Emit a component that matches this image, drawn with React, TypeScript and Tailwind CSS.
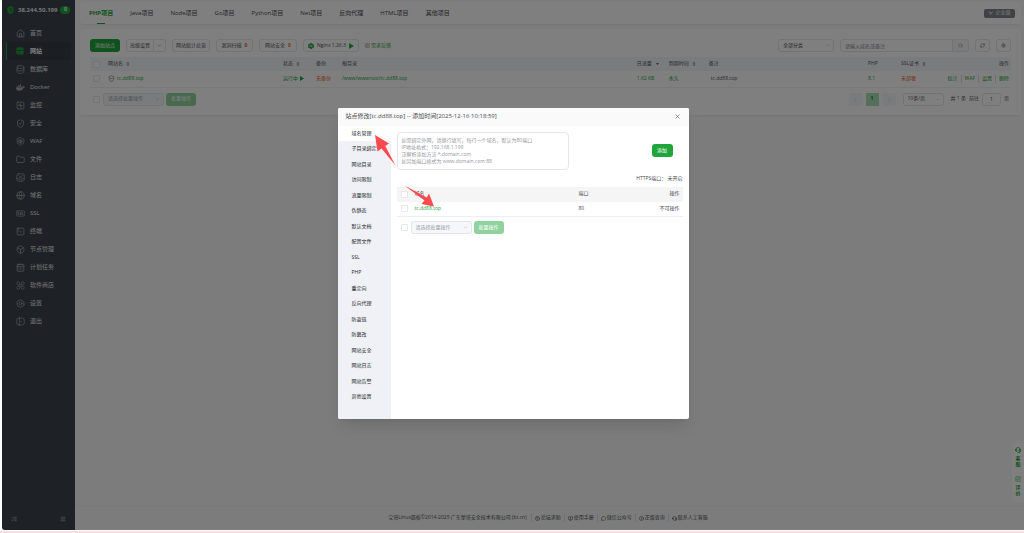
import type { ComponentType, ReactNode } from "react";
import {
  BookOpen,
  Bolt,
  Box,
  CalendarDays,
  ChevronDown,
  ChevronLeft,
  ChevronRight,
  CircleHelp,
  Folder,
  Globe,
  Headset,
  House,
  Info,
  ListChecks,
  Menu,
  MessageCircle,
  RefreshCw,
  Search,
  Settings,
  ShieldCheck,
  ShieldMinus,
  SquareActivity,
  SquarePen,
  SquareTerminal,
  X,
} from "lucide-react";
import { FaDocker } from "react-icons/fa6";
import { clsx } from "clsx";

function Glyph({ className, children }: { className?: string; children: ReactNode }) {
  return (
    <svg
      viewBox="0 0 24 24"
      className={className}
      fill="none"
      stroke="currentColor"
      strokeWidth={1.75}
      strokeLinecap="round"
      strokeLinejoin="round"
      aria-hidden
    >
      {children}
    </svg>
  );
}

function SiteIcon({ className }: { className?: string }) {
  return (
    <Glyph className={className}>
      <path d="M2 8V6a4 4 0 0 1 4-4h12a4 4 0 0 1 4 4v2Z" fill="currentColor" />
      <path d="M2 12h6v10H6a4 4 0 0 1-4-4Z" fill="currentColor" />
      <path d="M12 12h10v6a4 4 0 0 1-4 4h-6Z" fill="currentColor" />
    </Glyph>
  );
}

function DatabaseIcon({ className }: { className?: string }) {
  return (
    <Glyph className={className}>
      <rect x="3" y="2" width="18" height="7" rx="3.5" />
      <path d="M3 6v6c0 2 2 3.500 4 3.500h10c2 0 4-1.500 4-3.500V6M3 12v6c0 2 2 4 4 4h10c2 0 4-2 4-4v-6" />
    </Glyph>
  );
}

function WafIcon({ className }: { className?: string }) {
  return (
    <Glyph className={className}>
      <path d="M12 1.500 21 6v7c0 4.500-4 7.500-9 9.500-5-2-9-5-9-9.500V6Z" />
      <path d="M8 8h8v7l-4 2-4-2Z M8 11.500h8 M12 8v8" />
    </Glyph>
  );
}

function LogIcon({ className }: { className?: string }) {
  return (
    <Glyph className={className}>
      <rect x="2" y="2" width="20" height="20" rx="5" />
      <path d="M7 7l5 4 5-4M2 15h4l6-4 6 4h4M8 18h8" />
    </Glyph>
  );
}

function SslIcon({ className }: { className?: string }) {
  return (
    <Glyph className={className}>
      <rect x="1" y="5" width="22" height="14" rx="3" />
      <path d="M8 9H5v3h3v3H5M14 9h-3v3h3v3h-3M17 9v6h3" />
    </Glyph>
  );
}

function StoreIcon({ className }: { className?: string }) {
  return (
    <Glyph className={className}>
      <path d="M10 10H6a4 4 0 1 1 4-4ZM14 10V6a4 4 0 1 1 4 4ZM10 14v4a4 4 0 1 1-4-4ZM14 14h4a4 4 0 1 1-4 4Z" />
    </Glyph>
  );
}

function ExitIcon({ className }: { className?: string }) {
  return (
    <Glyph className={className}>
      <path d="M9 3H6a4 4 0 0 0-4 4v10a4 4 0 0 0 4 4h3M9 1.500v21M9 3h8a5 5 0 0 1 5 5v8a5 5 0 0 1-5 5H9M14 11v2" />
    </Glyph>
  );
}

const menuItems: { label: string; icon: ComponentType<{ className?: string }> }[] = [
  { label: "首页", icon: House },
  { label: "网站", icon: SiteIcon },
  { label: "数据库", icon: DatabaseIcon },
  { label: "Docker", icon: FaDocker },
  { label: "监控", icon: SquareActivity },
  { label: "安全", icon: ShieldCheck },
  { label: "WAF", icon: WafIcon },
  { label: "文件", icon: Folder },
  { label: "日志", icon: LogIcon },
  { label: "域名", icon: Globe },
  { label: "SSL", icon: SslIcon },
  { label: "终端", icon: SquareTerminal },
  { label: "节点管理", icon: Box },
  { label: "计划任务", icon: CalendarDays },
  { label: "软件商店", icon: StoreIcon },
  { label: "设置", icon: Bolt },
  { label: "退出", icon: ExitIcon },
];

const tabs = [
  "PHP项目",
  "Java项目",
  "Node项目",
  "Go项目",
  "Python项目",
  "Net项目",
  "反向代理",
  "HTML项目",
  "其他项目",
];

const siteMenu = [
  "域名管理",
  "子目录绑定",
  "网站目录",
  "访问限制",
  "流量限制",
  "伪静态",
  "默认文档",
  "配置文件",
  "SSL",
  "PHP",
  "重定向",
  "反向代理",
  "防盗链",
  "防篡改",
  "网站安全",
  "网站日志",
  "网站告警",
  "其他设置",
];

const footerLinks = [
  { label: "论坛求助", icon: CircleHelp },
  { label: "使用手册", icon: BookOpen },
  { label: "微信公众号", icon: MessageCircle },
  { label: "正版查询", icon: Info },
  { label: "联系人工客服", icon: Headset },
];

const domainHint = [
  "如需绑定外网，请换行填写，每行一个域名，默认为80端口",
  "IP地址格式：192.168.1.199",
  "泛解析添加方法 *.domain.com",
  "如另加端口格式为 www.domain.com:88",
].join("\n");

function Tick({ label }: { label: string }) {
  return (
    <input
      type="checkbox"
      aria-label={label}
      className="block size-[7px] shrink-0 appearance-none rounded-[1px] border border-[#e6e8ec] bg-white"
    />
  );
}

function Sort() {
  return (
    <svg viewBox="0 0 6 8" className="ml-[3px] inline-block h-[6px] w-[4px] align-middle" aria-hidden>
      <path d="M3 0.5 5.5 3.3H0.5Z M3 7.5 5.5 4.7H0.5Z" fill="#8a8f98" />
    </svg>
  );
}

function ToolButton({ children, className }: { children: ReactNode; className?: string }) {
  return (
    <button
      type="button"
      className={clsx(
        "flex h-[13px] items-center justify-center gap-[3px] rounded-[3px] border border-[#e4e6ea] bg-white whitespace-nowrap",
        className,
      )}
    >
      {children}
    </button>
  );
}

function Select({ label, value, className }: { label: string; value: string; className?: string }) {
  return (
    <div className={clsx("relative", className)}>
      <select
        aria-label={label}
        className="block h-[13px] w-full appearance-none rounded-[3px] border border-[#e4e6ea] bg-inherit pl-[4px]"
      >
        <option>{value}</option>
      </select>
      <ChevronDown className="pointer-events-none absolute top-[4px] right-[4px] size-[5px] text-[#a8abb2]" />
    </div>
  );
}

function BatchBar() {
  return (
    <div className="flex items-center">
      <Tick label="全选" />
      <Select
        label="批量操作"
        value="请选择批量操作"
        className="ml-[3px] w-[61px] rounded-[3px] bg-[#f5f7fa] text-[#9a9da4]"
      />
      <button type="button" className="ml-[2px] h-[13px] w-[30px] rounded-[3px] bg-[#90d29d] text-white">
        批量操作
      </button>
    </div>
  );
}

function Sidebar() {
  return (
    <aside className="flex w-[73px] shrink-0 flex-col rounded-bl-[3px] bg-[#3c444d] px-[4px] text-[6px] text-[#e6e8ea]">
      <div className="flex h-[20px] items-center pl-[1px] font-bold">
        <svg viewBox="0 0 16 18" className="mr-[4px] h-[8px] w-[7px] shrink-0" aria-hidden>
          <path d="M8 0 15 3v8c0 3-3 5.500-7 7-4-1.500-7-4-7-7V3Z" fill="#20a53a" />
          <path d="M5 5h6v3H8v2h3v3H5" fill="none" stroke="#25633a" strokeWidth="1.500" />
        </svg>
        38.244.50.199
        <span className="ml-[3px] flex h-[8px] w-[10px] items-center justify-center rounded-full bg-[#20a53a] text-[5px] text-white">
          0
        </span>
      </div>
      <nav className="mt-[4px] flex flex-col">
        {menuItems.map(({ label, icon: Icon }) => {
          const active = label === "网站";
          return (
            <a
              key={label}
              href="#"
              className={clsx(
                "flex h-[18px] items-center gap-[5px] border-l pl-[9px]",
                active ? "border-[#20a53a] bg-[#363d45] font-bold text-white" : "border-transparent",
              )}
            >
              <Icon
                className={clsx("shrink-0", active ? "size-[8px] mr-px text-[#20a53a]" : "size-[9px] text-[#a4a8ad]")}
              />
              {label}
            </a>
          );
        })}
      </nav>
      <div className="mt-auto flex items-center justify-between px-[5px] pb-[8px] text-[#a4a8ad]">
        <button type="button" aria-label="面板设置">
          <ListChecks className="size-[6px]" strokeWidth={3} />
        </button>
        <button type="button" aria-label="收起菜单">
          <Menu className="size-[6px]" strokeWidth={3} />
        </button>
      </div>
    </aside>
  );
}

function TabBar() {
  return (
    <header className="flex h-[22px] items-center rounded-[3px] bg-white pr-[6px] text-[6px] text-[#484b50] shadow-xs">
      <nav className="flex h-full gap-[17px] px-[9px]">
        {tabs.map((tab, i) => (
          <a
            key={tab}
            href="#"
            className={clsx(
              "flex h-full flex-col items-center pt-[7px] whitespace-nowrap",
              i === 0 && "font-bold text-[#20a53a]",
            )}
          >
            <span className="leading-[8px]">{tab}</span>
            {i === 0 && <span className="mt-auto h-px w-[8px] bg-[#20a53a]" />}
          </a>
        ))}
      </nav>
      <button
        type="button"
        className="ml-auto flex h-[9px] w-[31px] items-center justify-center gap-[2px] rounded-[2px] bg-[#80848a] text-[5px] text-[#f2f2f2]"
      >
        <svg viewBox="0 0 10 10" className="size-[5px]" aria-hidden>
          <path d="M1 2h3l1 5 4-6" fill="none" stroke="currentColor" strokeWidth="1.500" />
        </svg>
        企业版
      </button>
    </header>
  );
}

function Toolbar() {
  return (
    <div className="flex items-center gap-[6px]">
      <button type="button" className="h-[13px] w-[30px] rounded-[3px] bg-[#20a53a] text-white">
        添加站点
      </button>
      <div className="flex">
        <ToolButton className="w-[28px] rounded-r-none">高级设置</ToolButton>
        <ToolButton className="w-[12px] rounded-l-none border-l-0">
          <ChevronDown className="size-[5px]" aria-label="更多" />
        </ToolButton>
      </div>
      <ToolButton className="w-[38px]">网站统计总览</ToolButton>
      <ToolButton className="w-[37px]">
        漏洞扫描 <b className="text-[#f0642d]">0</b>
      </ToolButton>
      <ToolButton className="w-[38px]">
        网站安全 <b className="text-[#f0642d]">0</b>
      </ToolButton>
      <ToolButton className="w-[56px] gap-[2px]">
        <svg viewBox="0 0 12 12" className="size-[6px]" aria-hidden>
          <path d="M6 0 11.500 3v6L6 12 .5 9V3Z" fill="#109639" />
          <path d="M4 9V3.500L8 8.500V3" fill="none" stroke="#fff" strokeWidth="1.300" />
        </svg>
        Nginx 1.26.3
        <svg viewBox="0 0 8 10" className="h-[6px] w-[5px]" aria-hidden>
          <path d="M0 0 8 5 0 10Z" fill="#20a53a" />
        </svg>
      </ToolButton>
      <a href="#" className="flex items-center gap-px whitespace-nowrap text-[#20a53a]">
        <SquarePen className="size-[5px] text-[#606266]" />
        需求反馈
      </a>
      <div className="ml-auto flex items-center gap-[6px]">
        <Select label="分类" value="全部分类" className="w-[56px]" />
        <div className="flex">
          <input
            aria-label="搜索网站"
            placeholder="请输入域名或备注"
            className="h-[13px] w-[113px] rounded-l-[3px] border border-[#e4e6ea] px-[4px] placeholder:text-[#85898f]"
          />
          <button
            type="button"
            aria-label="搜索"
            className="flex h-[13px] w-[16px] items-center justify-center rounded-r-[3px] border border-l-0 border-[#e4e6ea] bg-[#f5f7fa]"
          >
            <Search className="size-[5px] text-[#80848a]" />
          </button>
        </div>
        <ToolButton className="w-[15px]">
          <RefreshCw className="size-[5px]" aria-label="刷新" />
        </ToolButton>
        <ToolButton className="w-[15px]">
          <Settings className="size-[5px]" aria-label="设置" />
        </ToolButton>
      </div>
    </div>
  );
}

function SiteTable() {
  return (
    <table className="mt-[5px] w-full table-fixed text-left whitespace-nowrap">
      <colgroup>
        <col className="w-[18px]" />
        <col className="w-[19%]" />
        <col className="w-[33px]" />
        <col className="w-[26px]" />
        <col className="w-[32%]" />
        <col className="w-[32px]" />
        <col className="w-[40px]" />
        <col />
        <col className="w-[33px]" />
        <col className="w-[40px]" />
        <col className="w-[70px]" />
      </colgroup>
      <thead>
        <tr className="h-[14px] bg-[#f5f7f8] text-[#50545a] *:font-normal">
          <th className="pl-[3px]">
            <Tick label="全选网站" />
          </th>
          <th>
            网站名
            <Sort />
          </th>
          <th>
            状态
            <Sort />
          </th>
          <th>备份</th>
          <th>根目录</th>
          <th>
            日流量
            <svg viewBox="0 0 6 4" className="ml-[4px] inline-block h-[2px] w-[3px] align-middle" aria-hidden>
              <path d="M0 0h6L3 4Z" fill="#606266" />
            </svg>
          </th>
          <th>
            到期时间
            <Sort />
          </th>
          <th>备注</th>
          <th>PHP</th>
          <th>
            SSL证书
            <Sort />
          </th>
          <th className="pr-[2px] text-right">操作</th>
        </tr>
      </thead>
      <tbody>
        <tr className="h-[16px] border-b border-[#f0f1f3] text-[#20a53a]">
          <td className="pl-[3px]">
            <Tick label="选择 tc.dd88.top" />
          </td>
          <td>
            <a href="#" className="flex items-center gap-[2px]">
              <ShieldMinus className="size-[7px] text-[#606266]" />
              tc.dd88.top
            </a>
          </td>
          <td>
            <a href="#" className="flex items-center gap-[2px]">
              运行中
              <svg viewBox="0 0 8 10" className="h-[5px] w-[4px]" aria-hidden>
                <path d="M0 0 8 5 0 10Z" fill="#20a53a" />
              </svg>
            </a>
          </td>
          <td className="text-[#f0642d]">无备份</td>
          <td>
            <a href="#">/www/wwwroot/tc.dd88.top</a>
          </td>
          <td>1.62 KB</td>
          <td>永久</td>
          <td className="pl-[2px] text-[#50545a]">tc.dd88.top</td>
          <td>8.1</td>
          <td className="text-[#f0642d]">未部署</td>
          <td className="pr-[2px]">
            <div className="flex justify-end divide-x divide-[#dcdfe6] *:px-[3px]">
              <a href="#">统计</a>
              <a href="#">WAF</a>
              <a href="#">设置</a>
              <a href="#" className="pr-0!">
                删除
              </a>
            </div>
          </td>
        </tr>
      </tbody>
    </table>
  );
}

function Pagination() {
  return (
    <div className="flex items-center pr-[2px]">
      <button type="button" aria-label="上一页" className="flex size-[13px] items-center justify-center bg-[#f5f7f8]">
        <ChevronLeft className="size-[5px] text-[#a8abb2]" />
      </button>
      <button type="button" className="mx-[4px] size-[13px] bg-[#a9dfb4] font-bold text-[#147c2a]">
        1
      </button>
      <button type="button" aria-label="下一页" className="flex size-[13px] items-center justify-center bg-[#f5f7f8]">
        <ChevronRight className="size-[5px] text-[#a8abb2]" />
      </button>
      <Select label="每页条数" value="10条/页" className="ml-[7px] w-[41px]" />
      <span className="ml-[7px]">共 1 条</span>
      <label className="ml-[3px] flex items-center gap-[3px]">
        前往
        <input defaultValue="1" className="h-[13px] w-[19px] rounded-[3px] border border-[#e4e6ea] text-center" />
        页
      </label>
    </div>
  );
}

function SideWidget() {
  return (
    <div className="absolute top-[441px] right-0 flex w-[12px] flex-col items-center gap-[9px] rounded-l-[3px] bg-white py-[6px] text-[5px] leading-[6px] font-bold text-[#20a53a]">
      <a href="#" className="flex w-[5px] flex-col items-center gap-[2px] break-all">
        <Headset className="size-[6px]" strokeWidth={3} />
        客服
      </a>
      <a href="#" className="flex w-[5px] flex-col items-center gap-[2px] break-all">
        <SquarePen className="size-[6px]" />
        评价
      </a>
    </div>
  );
}

function Footer() {
  return (
    <footer className="mt-auto flex h-[25px] items-center justify-center border-t border-[#f0f3f1] text-[5px] text-[#50545a]">
      <span className="mr-[4px]">宝塔Linux面板©2014-2025 广东堡塔安全技术有限公司 (bt.cn)</span>
      {footerLinks.map(({ label, icon: Icon }) => (
        <a key={label} href="#" className="flex items-center border-l border-[#dfe2e1] px-[3px]">
          <Icon className="mr-px size-[5px]" strokeWidth={2.5} />
          {label}
        </a>
      ))}
    </footer>
  );
}

function Arrows() {
  return (
    <svg viewBox="0 0 110 110" className="pointer-events-none absolute top-0 left-0 size-[110px]" aria-hidden>
      <g fill="#fb4b4e">
        <path d="M37 27 51 35.500 47.300 38 57.500 57.500 43.500 40.500 39.500 43.500Z" />
        <path d="M96 98.500 83.500 96 86.500 92.500 66.500 77.500 88.800 89.500 91 85.500Z" />
      </g>
    </svg>
  );
}

function SiteDialog() {
  return (
    <div
      role="dialog"
      aria-labelledby="site-dialog-title"
      className="relative w-[351px] overflow-hidden rounded-[2px] bg-white text-[5px] text-[#484b50] shadow-lg"
    >
      <div className="flex h-[18px] items-center justify-between bg-[#fafafa] px-[8px]">
        <h2 id="site-dialog-title" className="text-[6px]">
          站点修改[tc.dd88.top] -- 添加时间[2025-12-16 10:18:59]
        </h2>
        <button type="button" aria-label="关闭">
          <X className="size-[7px]" />
        </button>
      </div>
      <div className="flex">
        <nav className="w-[53px] shrink-0 bg-[#f0f1f6] pb-[14px] text-[#222428]">
          <div className="grid h-[279px] auto-rows-fr">
            {siteMenu.map((item, i) => (
              <a key={item} href="#" className={clsx("flex items-center pl-[14px]", i === 0 && "bg-white")}>
                {item}
              </a>
            ))}
          </div>
        </nav>
        <div className="min-w-0 grow px-[6px] pt-[6px]">
          <div className="flex items-center justify-between pr-[10px]">
            <textarea
              aria-label="域名"
              placeholder={domainHint}
              className="block h-[38px] w-[172px] resize-none overflow-hidden rounded-[4px] border border-[#e4e6ea] px-[4px] py-[4px] leading-[7px] placeholder:text-[#94979e]"
            />
            <button type="button" className="h-[13px] w-[21px] rounded-[3px] bg-[#20a53a] text-white">
              添加
            </button>
          </div>
          <p className="mt-[4px] text-right leading-[8px]">HTTPS端口： 未开启</p>
          <table className="mt-[5px] w-full table-fixed text-left">
            <colgroup>
              <col className="w-[18px]" />
              <col />
              <col className="w-[54px]" />
              <col className="w-[50px]" />
            </colgroup>
            <thead>
              <tr className="h-[15px] bg-[#f5f5f6] *:font-normal">
                <th className="pl-[4px]">
                  <Tick label="全选域名" />
                </th>
                <th>域名</th>
                <th>端口</th>
                <th className="pr-[3px] text-right">操作</th>
              </tr>
            </thead>
            <tbody>
              <tr className="h-[15px] border-b border-[#ebeef5]">
                <td className="pl-[4px]">
                  <Tick label="选择域名 tc.dd88.top" />
                </td>
                <td>
                  <a href="#" className="text-[#20a53a]">
                    tc.dd88.top
                  </a>
                </td>
                <td>80</td>
                <td className="pr-[3px] text-right">不可操作</td>
              </tr>
            </tbody>
          </table>
          <div className="mt-[4px] pl-[4px]">
            <BatchBar />
          </div>
        </div>
      </div>
      <Arrows />
    </div>
  );
}

export default function App() {
  return (
    <div className="flex min-h-screen flex-col bg-[#fbe0df] font-['Open_Sans','Noto_Sans_CJK_SC',sans-serif]">
      <div className="relative mb-[2px] flex grow border-b border-l-2 border-white bg-white">
        <Sidebar />
        <div className="relative flex min-w-0 grow flex-col bg-[#f6f9f7]">
          <main className="flex flex-col gap-[5px] pt-[2px] pr-[3px] pl-[5px]">
            <TabBar />
            <section className="rounded-[3px] bg-white px-[10px] pt-[10px] pb-[9px] text-[5px] text-[#50545a] shadow-xs">
              <Toolbar />
              <SiteTable />
              <div className="mt-[5px] flex items-center justify-between pl-[3px]">
                <BatchBar />
                <Pagination />
              </div>
            </section>
          </main>
          <SideWidget />
          <Footer />
        </div>
        <div className="absolute inset-0 flex items-center justify-center rounded-bl-[3px] bg-black/50 pb-[4px]">
          <SiteDialog />
        </div>
      </div>
    </div>
  );
}
